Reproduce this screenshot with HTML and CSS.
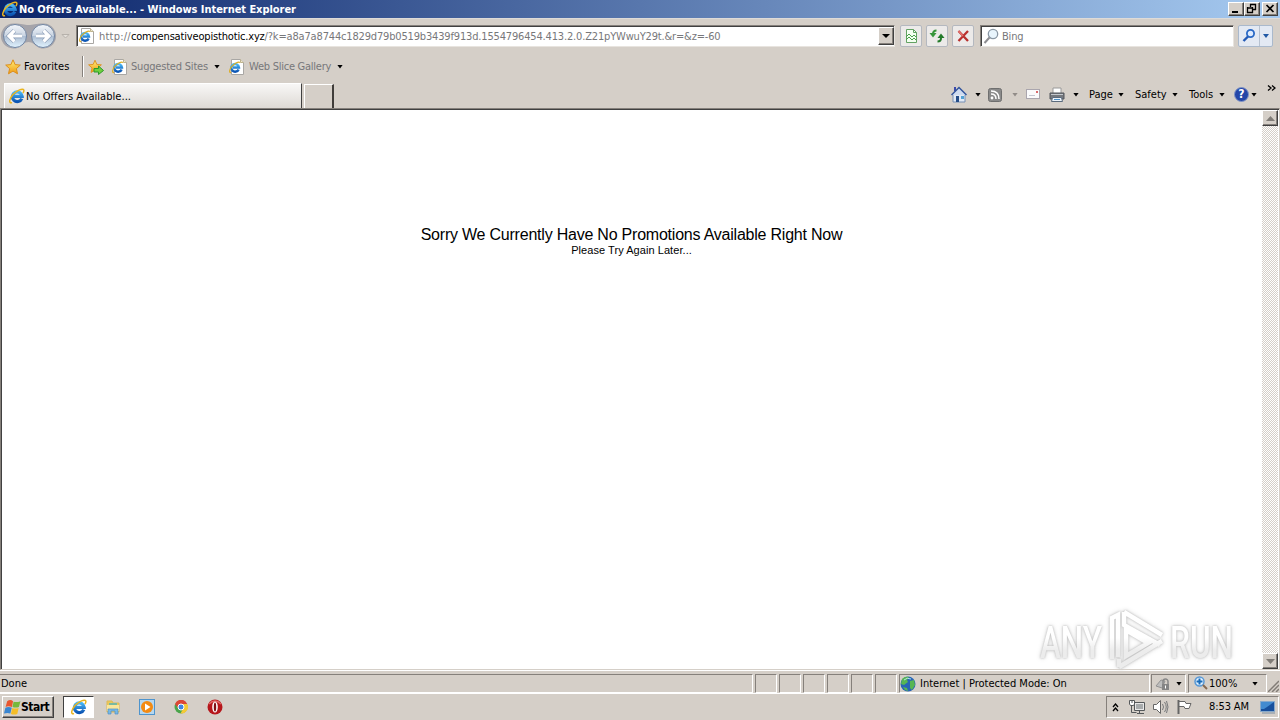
FILE: index.html
```
<!DOCTYPE html>
<html lang="en">
<head>
<meta charset="UTF-8" />
<title>No Offers Available...</title>
<link rel="stylesheet" href="styles.css">
</head>
<body>

<!-- Shared icons -->
<svg class="defs" width="0" height="0">
  <defs>
    <linearGradient id="blue" x1="0" y1="0" x2="0" y2="1"><stop offset="0" stop-color="#49b8f5"/><stop offset="1" stop-color="#0c55b4"/></linearGradient>
    <linearGradient id="gold" x1="0" y1="0" x2="0" y2="1"><stop offset="0" stop-color="#fff07a"/><stop offset="1" stop-color="#f09a12"/></linearGradient>
    <linearGradient id="orb" x1="0" y1="0" x2="0" y2="1"><stop offset="0" stop-color="#f4f7fb"/><stop offset=".48" stop-color="#c9d4e2"/><stop offset=".52" stop-color="#aebfd4"/><stop offset="1" stop-color="#e2f4ff"/></linearGradient>
    <linearGradient id="fade" gradientUnits="userSpaceOnUse" x1="0" y1="0" x2="0" y2="64"><stop offset=".45" stop-color="#fff"/><stop offset=".65" stop-color="#ececec"/></linearGradient>
    <symbol id="ie" viewBox="0 0 16 16">
      <path d="M12.800 10.700A4.900 4.900 0 1 1 13.200 8.400H5" fill="none" stroke="url(#blue)" stroke-width="3.200"/>
      <path d="M3 14.600C-.6 15.600 .2 11 4 6.600S14 -.2 14.800 2c.3 1-.3 2.300-.9 3.200" fill="none" stroke="#e9b41f" stroke-width="1.500"/>
    </symbol>
    <symbol id="iepage" viewBox="0 0 16 16">
      <path d="M2.500 .5h9l3 3v12h-12z" fill="#fff" stroke="#a9a7a4"/>
      <path d="M11.500 .5v3h3" fill="#f3e9c8" stroke="#bdb38f"/>
      <path d="M9.600 10.400A3.800 3.800 0 1 1 9.900 8.400H4" fill="none" stroke="url(#blue)" stroke-width="2.500"/>
      <path d="M2 13.500C-.3 14 .5 10 3 7.200S10 2 10.800 3.700" fill="none" stroke="#dcae25" stroke-width="1.200"/>
    </symbol>
    <symbol id="star" viewBox="0 0 16 16">
      <path d="M8 .8l2.100 4.800 5.200.5-3.900 3.500 1.100 5.200L8 12.100l-4.500 2.700 1.100-5.200L.7 6.100l5.200-.5z" fill="url(#gold)" stroke="#dc8e1c" stroke-width="1"/>
    </symbol>
  </defs>
</svg>

<div class="titlebar">
  <svg class="icon"><use href="#ie"/></svg>
  <span class="title">No Offers Available... - Windows Internet Explorer</span>
  <div class="winbtns">
    <button class="winbtn"><svg width="14" height="12"><path d="M3 9h6" stroke="#000" stroke-width="2"/></svg></button>
    <button class="winbtn"><svg width="14" height="12"><path d="M5 1.500h6M5.500 1v3M10.500 1v6M8 6.500h3M2 5h6M2.500 4v6M7.500 4v6M2 9.500h6" stroke="#000" stroke-width="1.300"/></svg></button>
    <button class="winbtn close"><svg width="14" height="12"><path d="M3.500 2l7 7M10.500 2l-7 7" stroke="#000" stroke-width="1.700"/></svg></button>
  </div>
</div>

<div class="navbar">
  <svg class="orbs" width="58" height="28" viewBox="0 0 58 28">
    <path d="M14 1.500C22 1.500 24 3 28.500 3S36 1.500 43 1.500A12.500 12.500 0 1 1 34 22Q28.500 18 23 22A12.500 12.500 0 1 1 14 1.500z" fill="#a5a4aa"/>
    <circle cx="15" cy="14" r="11.500" fill="url(#orb)" stroke="#7185a2"/>
    <circle cx="43" cy="14" r="11.500" fill="url(#orb)" stroke="#7185a2"/>
    <path d="M22 14H10M14.500 8.500L9 14l5.500 5.500M36 14h12M43.500 8.500L49 14l-5.500 5.500" fill="none" stroke="#8598b3" stroke-width="4.400"/>
    <path d="M22 14H10M14.500 8.500L9 14l5.500 5.500M36 14h12M43.500 8.500L49 14l-5.500 5.500" fill="none" stroke="#fff" stroke-width="3.200"/>
  </svg>
  <svg class="recent" width="9" height="7"><path d="M1 1.500h7L4.500 5z" fill="#e4e0da" stroke="#b6b1ab"/></svg>
  <div class="field address">
    <svg class="icon"><use href="#iepage"/></svg>
    <span class="url"><span class="scheme">http://</span><b>compensativeopisthotic.xyz</b>/?k=a8a7a8744c1829d79b0519b3439f913d.1554796454.413.2.0.Z21pYWwuY29t.&amp;r=&amp;z=-60</span>
    <span class="dropbtn"><i class="caret big"></i></span>
  </div>
  <div class="navbtn"><svg width="16" height="16"><path d="M3.500 1.500h7l3 3v10h-10z" fill="#f4fff1" stroke="#63a263"/><path d="M10.500 1.500v3h3" fill="none" stroke="#63a263"/><path d="M3 9l3-3 3 3 2-2 2 2M3 12l3-3 3 3 2-2 2 2" fill="none" stroke="#4aa14b"/></svg></div>
  <div class="navbtn"><svg width="16" height="16"><path d="M7.500 2.500Q4 2.500 4 6" fill="none" stroke="#37953b" stroke-width="2"/><path d="M.5 5h7L4 9.500z" fill="#37953b"/><path d="M8.500 13.500Q12 13.500 12 10" fill="none" stroke="#237a2a" stroke-width="2"/><path d="M8.500 10h7L12 5.500z" fill="#237a2a"/></svg></div>
  <div class="navbtn"><svg width="16" height="16"><path d="M3.500 3l9.500 10M13 3L3.500 13" stroke="#b9302e" stroke-width="2.300"/><path d="M3.500 3L8 8" stroke="#e87671" stroke-width="1.300"/></svg></div>
  <div class="field search">
    <svg width="17" height="17"><circle cx="10" cy="6" r="4.700" fill="#e8f4fc" stroke="#8a97a4" stroke-width="1.300"/><path d="M6.500 9.500L1.500 15" stroke="#8d8d91" stroke-width="2"/></svg>
    <span class="hint">Bing</span>
  </div>
  <div class="go">
    <span class="gobtn"><svg width="16" height="16"><circle cx="9.500" cy="5.500" r="3.600" fill="#dceaff" stroke="#2868c5" stroke-width="1.800"/><path d="M7 8.500L2.500 13" stroke="#2259b5" stroke-width="2.400"/></svg></span>
    <span class="godrop"><i class="caret blue"></i></span>
  </div>
</div>

<div class="favbar">
  <svg class="icon"><use href="#star"/></svg>
  <span class="fav">Favorites</span>
  <i class="divider"></i>
  <svg class="icon addfav" viewBox="0 0 16 16"><use href="#star" width="14" height="15"/><path d="M6 9.500h4.500V7l5 4.500-5 4V13H6z" fill="#6fd03f" stroke="#2d982a"/></svg>
  <svg class="icon ml"><use href="#iepage"/></svg>
  <span class="suggested">Suggested Sites</span><i class="caret"></i>
  <svg class="icon ml2"><use href="#iepage"/></svg>
  <span class="slice">Web Slice Gallery</span><i class="caret"></i>
</div>

<div class="tabbar">
  <div class="tab"><svg class="icon"><use href="#ie"/></svg><span>No Offers Available...</span></div>
  <div class="newtab"></div>
  <div class="commands">
    <svg class="home" width="16" height="17"><path d="M2 8h12v8H2z" fill="#e1e9f5" stroke="#7790b5"/><path d="M3 1h2v4H3z" fill="#3c4baa"/><path d="M.5 9L8 1.500 15.500 9" fill="#cfdcf0" stroke="#32549b" stroke-width="1.500"/><path d="M5 10h3v6H5z" fill="#244d88"/><path d="M10 10h3v3h-3z" fill="#54a2d5"/></svg>
    <i class="caret c1"></i>
    <svg class="rss" width="14" height="14"><rect x=".5" y=".5" width="13" height="13" rx="2" fill="#8a8a8a" stroke="#6f6f6f"/><circle cx="4" cy="10" r="1.400" fill="#fff"/><path d="M3 6q5 0 5 5M3 3q8 0 8 8" fill="none" stroke="#fff" stroke-width="1.500"/></svg>
    <i class="caret dim c2"></i>
    <svg class="mail" width="14" height="11"><rect x=".5" y=".5" width="13" height="9" fill="#fbfbfc" stroke="#aaa6ae"/><path d="M10 2h2v2h-2z" fill="#da6a6c"/><path d="M3 6.500h6" stroke="#c4c6d0"/></svg>
    <svg class="print" width="16" height="16"><path d="M4 1h8v6H4z" fill="#fff" stroke="#999"/><path d="M1 6h14v6H1z" fill="#76797e" stroke="#53575c"/><path d="M2 7.500h12" stroke="#c5c9cd"/><path d="M3.500 10.500h9l1 4h-11z" fill="#eef4fa" stroke="#5b6b7d"/><path d="M5 12.500h6" stroke="#4d91c7"/></svg>
    <i class="caret c3"></i>
    <span class="page">Page</span><i class="caret"></i>
    <span class="safety">Safety</span><i class="caret"></i>
    <span class="tools">Tools</span><i class="caret"></i>
    <span class="help">?</span><i class="caret"></i>
    <svg class="more" width="9" height="7"><path d="M1 .5l3 2.500-3 2.500M5 .5L8 3 5 5.500" fill="none" stroke="#000" stroke-width="1.300"/></svg>
  </div>
</div>

<div class="viewport">
  <div class="content">
    <div class="sorry"><span>Sorry We Currently Have No Promotions Available Right Now</span></div>
    <div class="later"><span>Please Try Again Later...</span></div>
    <svg class="watermark" width="210" height="68" viewBox="0 0 210 68">
      <g class="mark">
        <text x="4" y="49" textLength="62" lengthAdjust="spacingAndGlyphs">ANY</text>
        <text x="134" y="49" textLength="63" lengthAdjust="spacingAndGlyphs">RUN</text>
        <path d="M76 50V9l6-3v42M88 3l38 23M88 3v13l36 20M90 21v26l22-13zM83 58l43-26M83 50v8" fill="none" stroke="url(#fade)" stroke-width="4.500"/>
      </g>
    </svg>
  </div>
  <div class="scrollbar">
    <span class="scrollbtn"><svg width="9" height="5"><path d="M4.500 0L9 5H0z" fill="#807c77"/></svg></span>
    <span class="scrollbtn"><svg width="9" height="5"><path d="M0 0h9L4.500 5z" fill="#807c77"/></svg></span>
  </div>
</div>

<div class="statusbar">
  <div class="pane done">Done</div>
  <div class="pane cell"></div>
  <div class="pane cell"></div>
  <div class="pane cell"></div>
  <div class="pane cell"></div>
  <div class="pane cell"></div>
  <div class="pane cell"></div>
  <div class="pane zone">
    <svg width="16" height="16"><circle cx="8" cy="8" r="7.500" fill="#2865b5"/><path d="M2 3q3-3 7-2l-2 3 1 2-4 3-3-1zM10 5l4-1 1 5-3 5-2-2zM3 11l4 1 1 3-3-1z" fill="#57b652"/><path d="M4 4q3-3 7-1" stroke="#b4e4e8" fill="none"/></svg>
    <span>Internet | Protected Mode: On</span>
  </div>
  <div class="pane lock">
    <svg width="17" height="16"><path d="M1 10l5-6 4 1-3 7z" fill="#bdbdbd" stroke="#929292"/><path d="M8 8V5.500a2.500 2.500 0 0 1 5 0V8" fill="none" stroke="#888" stroke-width="1.500"/><rect x="7" y="8" width="7" height="6" fill="#858585"/><path d="M10.500 9.500v3" stroke="#fff"/></svg>
    <i class="caret"></i>
  </div>
  <div class="pane zoom">
    <svg width="14" height="15"><circle cx="5.500" cy="5.500" r="4.500" fill="#e3f2ff" stroke="#5798d6" stroke-width="1.500"/><path d="M5.500 2.500v6M2.500 5.500h6" stroke="#176bb9" stroke-width="2"/><path d="M9 9l4 4" stroke="#866950" stroke-width="2"/></svg>
    <span>100%</span>
    <i class="caret"></i>
  </div>
  <svg class="grip" width="11" height="13"><path d="M0 13L11 2M4 13l7-7M8 13l3-3" stroke="#817c76" stroke-width="1.500"/></svg>
</div>

<div class="taskbar">
  <div class="start">
    <svg width="17" height="17" viewBox="0 0 16 16"><path d="M3 2q3-2 5.500 0L7.500 7.500Q4 6 1.500 7.500z" fill="#e9562f"/><path d="M9 2.500q3 1 6.500-.5L14 7.500q-3 1-6 0z" fill="#76b83c"/><path d="M1.300 8.200q3-1.500 6 0l-1.300 5.500q-2.500-1-6 0z" fill="#3a86d0"/><path d="M7.800 8.500q3 1 6 0L12.500 14q-3 1-6 0z" fill="#f4bd27"/></svg>
    <b>Start</b>
  </div>
  <div class="task active"><svg class="icon"><use href="#ie"/></svg></div>
  <div class="task"><svg width="16" height="16"><path d="M2 2h5l1 2h6v9H2z" fill="#edc858" stroke="#dcb958"/><path d="M4 4h8v3H4z" fill="#79b9a0"/><path d="M2 6h12v6H2z" fill="#fae69b"/><path d="M3 15v-5h10v5h-3v-3H6v3z" fill="#78b9e5" stroke="#4d91c7" stroke-width=".7"/></svg></div>
  <div class="task"><svg width="16" height="16"><rect x=".5" y=".5" width="15" height="15" fill="#b6d7ef" stroke="#4e94cd"/><circle cx="8" cy="8" r="6" fill="#f38a12"/><path d="M6 4.500v7L11.500 8z" fill="#fff"/></svg></div>
  <div class="task"><svg width="14" height="14"><circle cx="7" cy="7" r="6.500" fill="#4aa44b"/><path d="M1 4a6.500 6.500 0 0 1 12.200 0H7L4 8z" fill="#dc4736"/><path d="M13.200 4A6.500 6.500 0 0 1 6.500 13.500L10 7 8 4z" fill="#f5ca36"/><circle cx="7" cy="7" r="3" fill="#4086e3" stroke="#fff"/></svg></div>
  <div class="task"><svg width="16" height="16"><circle cx="8" cy="8" r="7.500" fill="#b6161b"/><path d="M2 5q6-6 12 0" stroke="#e26665" fill="none" stroke-width="1.500"/><ellipse cx="8" cy="8" rx="2.800" ry="5.600" fill="#fff"/><ellipse cx="8" cy="8" rx="1.200" ry="4.600" fill="#7f1015"/></svg></div>
  <div class="tray">
    <svg class="up" width="7" height="9"><path d="M1 4l2.500-3L6 4M1 8l2.500-3L6 8" fill="none" stroke="#000" stroke-width="1.300"/></svg>
    <svg class="net" width="16" height="16"><path d="M5.500 3.500h10v8h-10zM8 14.500h7M10.500 12v2" fill="#e8e8e8" stroke="#55585a"/><path d="M7 5h7v5H7z" fill="#a8abac"/><path d="M2.500 5v8.500h5" fill="none" stroke="#55585a"/><path d="M.5 1.500h5V5l-1 1.500h-3L.5 5z" fill="#fff" stroke="#55585a"/><path d="M3 1v3" stroke="#55585a"/></svg>
    <svg class="sound" width="17" height="16"><path d="M1.500 5.500h3l4-4v13l-4-4h-3z" fill="#fff" stroke="#666"/><path d="M10.500 5q2 3 0 6M12.500 3q3.500 5 0 10M14.500 2q3 6 0 12" fill="none" stroke="#77797b"/></svg>
    <svg class="flag" width="17" height="16"><path d="M2.500 1v14" stroke="#666" stroke-width="2"/><path d="M3 2.500h6l1 2h5l-2 5H9l-1-2H3z" fill="#fff" stroke="#666"/></svg>
    <span class="clock">8:53 AM</span>
    <svg class="desk" width="16" height="13"><path d="M.5 .5h14v10H.5z" fill="#174f9c" stroke="#87a9cb"/><path d="M1 1h13L4 8H1z" fill="#438bd0"/><path d="M2 12h13" stroke="#7a8fa3"/></svg>
  </div>
</div>

</body>
</html>
```
FILE: styles.css
```
* {
  box-sizing: border-box;
}
body {
  margin: 0;
  width: 1280px;
  height: 720px;
  overflow: hidden;
  display: flex;
  flex-direction: column;
  background: #d5cfc8;
  color: #000;
  font-family: "DejaVu Sans Condensed", "DejaVu Sans", sans-serif;
  font-stretch: condensed;
  font-size: 11px;
  line-height: 14px;
  white-space: nowrap;
}
svg {
  flex: none;
  display: block;
}
.defs {
  position: absolute;
}
.icon {
  width: 16px;
  height: 16px;
}
.caret {
  flex: none;
  width: 6px;
  height: 4px;
  margin-right: -1px;
  background: #000;
  clip-path: polygon(0 0, 100% 0, 50% 100%);
}
.caret.big {
  width: 8px;
  margin: 0;
}
.caret.blue {
  margin: 0;
  background: #2159a5;
}
.caret.dim {
  background: #918c88;
}

/* Title bar */
.titlebar {
  height: 18px;
  flex: none;
  display: flex;
  align-items: center;
  padding: 0 2px;
  background: linear-gradient(90deg, #0a246a, #a6caf0);
  color: #fff;
  font-weight: bold;
}
.titlebar .title {
  margin-left: 1px;
  padding-top: 1px;
  letter-spacing: -0.05px;
}
.winbtns {
  margin-left: auto;
  display: flex;
}
.winbtn {
  width: 16px;
  height: 14px;
  padding: 0;
  background: #d5cfc8;
  border: 1px solid;
  border-color: #fff #404040 #404040 #fff;
  box-shadow: inset -1px -1px #85807b;
}
.winbtn.close {
  margin-left: 2px;
}

/* Address row */
.navbar {
  height: 35px;
  flex: none;
  display: flex;
  align-items: center;
  border-top: 1px solid #dedbd8;
}
.orbs {
  margin-top: -1px;
}
.recent {
  margin: 0 7px 0 3px;
}
.field {
  height: 22px;
  display: flex;
  align-items: center;
  background: #fff;
  border: 1px solid;
  border-color: #85807b #e8e4df #e8e4df #85807b;
  box-shadow: inset 1px 1px #404040;
}
.address {
  width: 819px;
  margin-left: -1px;
  padding-left: 2px;
}
.url {
  flex: 1;
  padding: 1px 0 0 4px;
  color: #77777a;
  letter-spacing: -0.165px;
}
.url .scheme {
  letter-spacing: 0.22px;
}
.url b {
  color: #000;
  font-weight: normal;
  letter-spacing: -0.17px;
}
.dropbtn {
  width: 16px;
  height: 18px;
  display: grid;
  place-items: center;
  background: #d5cfc8;
  border: 1px solid;
  border-color: #fff #404040 #404040 #fff;
  box-shadow: inset -1px -1px #85807b;
}
.navbtn {
  width: 22px;
  height: 22px;
  margin-left: 5px;
  display: grid;
  place-items: center;
  background: #eceae9;
  border: 1px solid #b4b8bf;
  border-radius: 2px;
}
.navbtn + .navbtn {
  margin-left: 4px;
}
.search {
  width: 254px;
  margin-left: 6px;
  padding-left: 2px;
}
.hint {
  margin-left: 2px;
  padding-top: 1px;
  color: #77777a;
  letter-spacing: -0.2px;
}
.go {
  margin-left: 4px;
  height: 22px;
  display: flex;
  background: #e3e9f3;
  border: 1px solid #aab9cc;
  border-radius: 2px;
}
.gobtn,
.godrop {
  width: 20px;
  display: grid;
  place-items: center;
}
.godrop {
  width: 13px;
  border-left: 1px solid #b7c2d1;
}

/* Favorites row */
.favbar {
  height: 27px;
  flex: none;
  display: flex;
  align-items: center;
  padding-left: 5px;
}
.fav {
  width: 58px;
  margin-left: 3px;
  letter-spacing: 0.1px;
}
.divider {
  width: 2px;
  height: 21px;
  border-left: 1px solid #85807b;
  border-right: 1px solid #fff;
}
.addfav {
  margin-left: 4px;
}
.ml {
  margin-left: 8px;
}
.ml2 {
  margin-left: 10px;
}
.suggested,
.slice {
  padding-top: 1px;
  color: #77777a;
}
.suggested {
  width: 83px;
  margin-left: 3px;
  letter-spacing: -0.2px;
}
.slice {
  width: 88px;
  margin-left: 4px;
  letter-spacing: -0.25px;
}

/* Tab row */
.tabbar {
  height: 28px;
  flex: none;
  display: flex;
  padding-left: 4px;
}
.tab {
  width: 298px;
  height: 25px;
  margin-top: 3px;
  display: flex;
  align-items: center;
  padding-left: 4px;
  background: linear-gradient(#f8f7f6, #dedad5);
  border: 1px solid #fff;
  border-right: 1px solid #404040;
  border-bottom: 0;
}
.tab span {
  margin-left: 1px;
  padding-top: 1px;
  letter-spacing: 0.05px;
}
.newtab {
  width: 30px;
  height: 24px;
  margin: 4px 0 0 2px;
  border: 1px solid #fff;
  border-right: 2px solid #403d3a;
  border-bottom: 0;
}
.commands {
  margin-left: auto;
  width: 329px;
  height: 29px;
  display: flex;
  align-items: center;
}
.c1 {
  margin: 0 7px 0 8px;
}
.c2 {
  margin: 0 8px 0 10px;
}
.print {
  margin-left: 9px;
}
.c3 {
  margin: 0 10px 0 8px;
}
.page {
  width: 29px;
}
.safety {
  width: 37px;
  margin-left: 12px;
}
.tools {
  width: 30px;
  margin-left: 12px;
}
.help {
  width: 15px;
  height: 15px;
  margin: 0 2px 0 10px;
  border-radius: 50%;
  border: 1px solid #8195c7;
  background: #2446a8;
  color: #fff;
  font-weight: bold;
  font-size: 12px;
  line-height: 13px;
  text-align: center;
}
.more {
  margin: -13px 0 0 11px;
}

/* Page */
.viewport {
  height: 562px;
  flex: none;
  display: flex;
  padding: 0 1px 0 0;
  background: #fff;
  border: 1px solid;
  border-color: #85807b #d5cfc8 #d5cfc8 #85807b;
  box-shadow: inset 1px 1px #404040;
}
.content {
  position: relative;
  width: 1261px;
  padding-top: 117px;
  text-align: center;
  font-family: "Liberation Sans", Arial, sans-serif;
  font-stretch: normal;
}
.sorry {
  font-size: 16px;
  line-height: 18px;
  letter-spacing: -0.22px;
}
.later {
  line-height: 13px;
  letter-spacing: 0.06px;
}
.watermark {
  position: absolute;
  left: 1035px;
  top: 500px;
  overflow: visible;
}
.mark {
  filter: drop-shadow(0 0 1px #bbb) drop-shadow(0 0 2px #ddd);
}
.mark text {
  font: 500 44px Roboto, sans-serif;
  fill: url(#fade);
}
.scrollbar {
  width: 16px;
  margin-top: 1px;
  display: flex;
  flex-direction: column;
  justify-content: space-between;
  background: repeating-conic-gradient(#d5cfc8 0 25%, #fff 0 50%) 0 0 / 2px 2px;
}
.scrollbtn {
  height: 16px;
  display: grid;
  place-items: center;
  background: #d5cfc8;
  border: 1px solid;
  border-color: #fff #404040 #404040 #fff;
  box-shadow: inset -1px -1px #85807b;
}

/* Status bar */
.statusbar {
  height: 23px;
  flex: none;
  display: flex;
  gap: 2px;
  padding-top: 3px;
  border-top: 1px solid #fff;
}
.pane {
  height: 19px;
  flex: none;
  display: flex;
  align-items: center;
  border: 1px solid;
  border-color: #85807b #fff #fff #85807b;
}
.done {
  width: 753px;
  border-left: 0;
  padding-left: 1px;
}
.cell {
  width: 22px;
}
.zone {
  width: 251px;
}
.zone span {
  margin-left: 4px;
}
.lock {
  width: 35px;
  margin-left: -1px;
  padding-left: 3px;
}
.lock .caret {
  margin-left: 4px;
}
.zoom {
  width: 79px;
  padding-left: 5px;
}
.zoom span {
  width: 43px;
  margin-left: 1px;
}
.grip {
  margin: 5px 0 0 -1px;
}

/* Taskbar */
.taskbar {
  height: 27px;
  flex: none;
  display: flex;
  align-items: center;
  border-top: 1px solid #fff;
}
.start {
  width: 52px;
  height: 22px;
  margin: 0 9px 0 2px;
  display: flex;
  align-items: center;
  padding-left: 1px;
  border: 1px solid;
  border-color: #fff #404040 #404040 #fff;
  box-shadow: inset -1px -1px #85807b;
  font-size: 12px;
  letter-spacing: -0.5px;
}
.task {
  width: 31px;
  height: 22px;
  margin-right: 3px;
  display: grid;
  place-items: center;
}
.task.active {
  background: #fff;
  border: 1px solid;
  border-color: #404040 #fff #fff #404040;
}
.tray {
  width: 173px;
  height: 22px;
  margin: 0 1px 0 auto;
  display: flex;
  align-items: center;
  padding-left: 5px;
  border: 1px solid;
  border-color: #85807b #fff #fff #85807b;
}
.net {
  margin-left: 10px;
}
.sound {
  margin-left: 7px;
}
.flag {
  margin-left: 7px;
}
.clock {
  width: 51px;
  margin-left: 16px;
  letter-spacing: -0.1px;
}
```
